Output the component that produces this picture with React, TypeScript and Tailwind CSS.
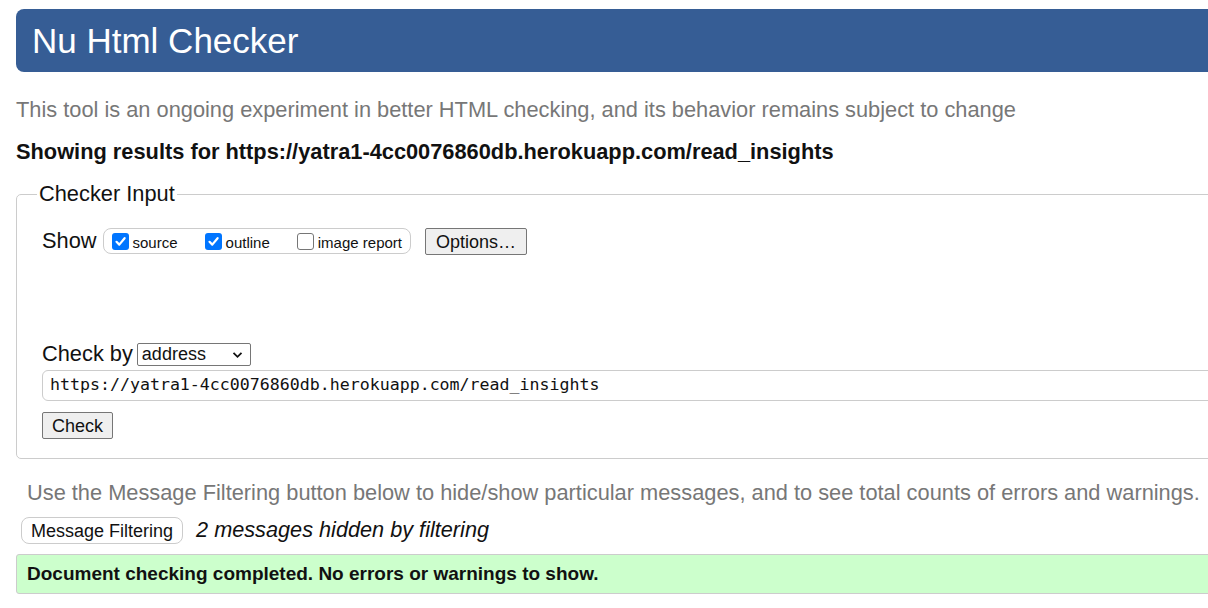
import React from "react"

const sans = { fontFamily: '"Liberation Sans", Arial, sans-serif' }

function Check({ checked, label }: { checked: boolean; label: string }) {
  return (
    <label className="flex items-center gap-[4px]">
      {checked ? (
        <span className="w-[17px] h-[17px] rounded-[3px] bg-[#0075ff] flex items-center justify-center">
          <svg width="13" height="13" viewBox="0 0 13 13" fill="none">
            <path d="M2.5 6.8 L5.3 9.6 L10.6 3.2" stroke="white" strokeWidth="2.2" strokeLinecap="round" strokeLinejoin="round" />
          </svg>
        </span>
      ) : (
        <span className="w-[17px] h-[17px] rounded-[3px] border border-[#767676] bg-white" />
      )}
      <span className="text-[15px] text-[#111] mt-[4px]">{label}</span>
    </label>
  )
}

export default function App() {
  return (
    <div className="w-[1208px] h-[608px] overflow-hidden bg-white" style={sans}>
      <div className="w-[1230px] ml-4">
        {/* Header */}
        <div className="mt-[9px] h-[63px] rounded-l-lg bg-[#365d95] flex items-center pl-4">
          <h1 className="text-[35px] text-white leading-none">Nu Html Checker</h1>
        </div>

        <p className="mt-[26px] h-6 leading-6 text-[21.8px] text-[#777]">
          This tool is an ongoing experiment in better HTML checking, and its behavior remains subject to change
        </p>
        <p className="mt-[18px] h-6 leading-6 text-[21.8px] font-bold text-[#111]">
          Showing results for https://yatra1-4cc0076860db.herokuapp.com/read_insights
        </p>

        {/* Checker input */}
        <fieldset className="mt-[18px] border border-[#ccc] rounded-[5px] pl-5 pb-[19px]">
          <legend className="px-[2px] text-[21.8px] leading-6 text-[#111]">Checker Input</legend>

          <div className="ml-[5px] mt-[22px] flex items-center h-[26px]">
            <span className="text-[21.8px] text-[#111] mr-[6px]">Show</span>
            <div className="h-[26px] flex items-center gap-[27px] border border-[#ccc] rounded-lg pl-[8px] pr-[8px]">
              <Check checked label="source" />
              <Check checked label="outline" />
              <Check checked={false} label="image report" />
            </div>
            <button className="ml-[14px] h-[27px] px-[10px] text-[18px] text-[#111] bg-[#efefef] border border-[#767676] rounded-[2px]">
              Options…
            </button>
          </div>

          <div className="ml-[5px] mt-[89px] flex items-center h-[23px]">
            <span className="text-[21.8px] text-[#111] mr-[4px]">Check by</span>
            <div className="w-[114px] h-[23px] border border-[#767676] rounded-[2px] flex items-center justify-between pl-[4px] pr-[7px]">
              <span className="text-[18px] text-[#111]">address</span>
              <svg width="11" height="8" viewBox="0 0 11 8" fill="none">
                <path d="M1.5 1.8 L5.5 5.8 L9.5 1.8" stroke="#111" strokeWidth="1.8" />
              </svg>
            </div>
          </div>

          <div className="ml-[5px] mt-[4px] h-[31px] border border-[#ccc] rounded-md flex items-center pl-[7px]">
            <span className="text-[16.6px] text-[#111]" style={{ fontFamily: '"DejaVu Sans Mono", "Liberation Mono", monospace' }}>
              https://yatra1-4cc0076860db.herokuapp.com/read_insights
            </span>
          </div>

          <button className="ml-[5px] mt-[11px] h-[27px] px-[9px] text-[18px] text-[#111] bg-[#efefef] border border-[#767676] rounded-[2px]">
            Check
          </button>
        </fieldset>

        <p className="mt-[22px] ml-[11px] h-6 leading-6 text-[21.8px] text-[#777]">
          Use the Message Filtering button below to hide/show particular messages, and to see total counts of errors and warnings.
        </p>

        <div className="mt-[12px] ml-[5px] flex items-center h-[27px]">
          <button className="h-[27px] px-[9px] text-[18px] text-[#111] bg-white border border-[#ccc] rounded-lg">
            Message Filtering
          </button>
          <span className="ml-[13px] text-[21.7px] italic text-[#111]">2 messages hidden by filtering</span>
        </div>

        <div className="mt-[10px] h-[40px] bg-[#ccffcc] border border-[#ccc] rounded-[3px] flex items-center pl-[10px]">
          <span className="text-[19px] font-bold text-[#111]">Document checking completed. No errors or warnings to show.</span>
        </div>
      </div>
    </div>
  )
}
